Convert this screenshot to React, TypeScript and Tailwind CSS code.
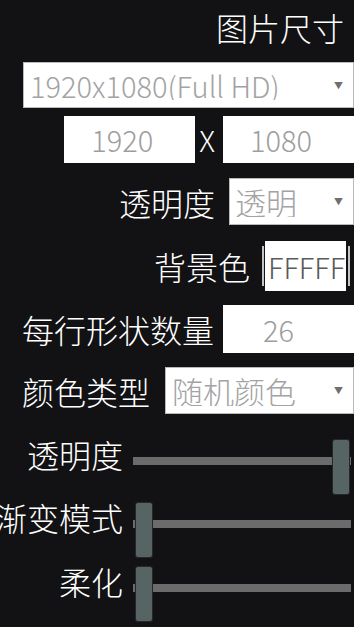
import React from "react";

function Select({ text, className }: { text: string; className: string }) {
  return (
    <div className={`flex items-center bg-white border border-[#b9b9b9] text-[#a3a3a3] ${className}`}>
      <span className="flex-1 whitespace-nowrap overflow-hidden">{text}</span>
      <span className="text-[9px] text-[#6f6f6f] pr-[10px]">▼</span>
    </div>
  );
}

function Slider({ label, atEnd }: { label: string; atEnd?: boolean }) {
  return (
    <div className="flex h-[56px]">
      <div className="w-[123px] flex justify-end whitespace-nowrap leading-[30px] shrink-0">{label}</div>
      <div className="relative ml-[10px] w-[219px] h-[56px]">
        <div className="absolute left-0 right-[1px] top-[18px] h-[8px] bg-[#6b6b6b]" />
        <div
          className={`absolute top-0 w-[18px] h-[56px] rounded-[3px] bg-[#566463] border border-[#262828] ${
            atEnd ? "left-[199px]" : "left-[2px]"
          }`}
        />
      </div>
    </div>
  );
}

export default function App() {
  return (
    <div className="w-[354px] h-[627px] overflow-hidden bg-[#121214] text-white font-['Noto_Sans_CJK_SC',sans-serif] font-light text-[30px] leading-none flex flex-col">
      <div className="mt-[7px] h-[40px] flex items-center justify-end pr-[10px] text-[32px]">图片尺寸</div>

      <Select text="1920x1080(Full HD)" className="mt-[15px] ml-[23px] h-[46px] pl-[6px] text-[29px]" />

      <div className="mt-[8px] h-[47px] flex items-center justify-end text-[29px]">
        <div className="w-[131px] h-[47px] bg-white text-[#9d9d9d] flex items-center pl-[27px]">1920</div>
        <span className="ml-[4px] mr-[8px]">X</span>
        <div className="w-[131px] h-[47px] bg-white text-[#9d9d9d] flex items-center pl-[27px]">1080</div>
      </div>

      <div className="mt-[15px] h-[47px] flex items-center justify-end">
        <span className="text-[32px]">透明度</span>
        <Select text="透明" className="ml-[14px] w-[125px] h-[47px] pl-[5px] text-[31px]" />
      </div>

      <div className="mt-[16px] h-[50px] flex items-center justify-end pr-[4px]">
        <span className="text-[32px]">背景色</span>
        <div className="ml-[12px] w-[2px] h-[40px] bg-[#c4c4c4]" />
        <div className="ml-[1px] w-[81px] h-[50px] bg-white text-[#5a5a5a] overflow-hidden whitespace-nowrap flex items-center pl-[3px] text-[29px]">
          FFFFFF
        </div>
        <div className="ml-[2px] w-[2px] h-[40px] bg-[#c4c4c4]" />
      </div>

      <div className="mt-[14px] h-[48px] flex items-center justify-end">
        <span className="text-[32px]">每行形状数量</span>
        <div className="ml-[9px] w-[131px] h-[48px] bg-white text-[#9d9d9d] flex items-center pl-[40px] text-[29px]">26</div>
      </div>

      <div className="mt-[14px] h-[47px] flex items-center justify-end">
        <span className="text-[32px]">颜色类型</span>
        <Select text="随机颜色" className="ml-[15px] w-[189px] h-[47px] pl-[6px] text-[31px]" />
      </div>

      <div className="mt-[25px] text-[32px]">
        <Slider label="透明度" atEnd />
      </div>
      <div className="mt-[7px] text-[32px]">
        <Slider label="渐变模式" />
      </div>
      <div className="mt-[8px] text-[32px]">
        <Slider label="柔化" />
      </div>
    </div>
  );
}
